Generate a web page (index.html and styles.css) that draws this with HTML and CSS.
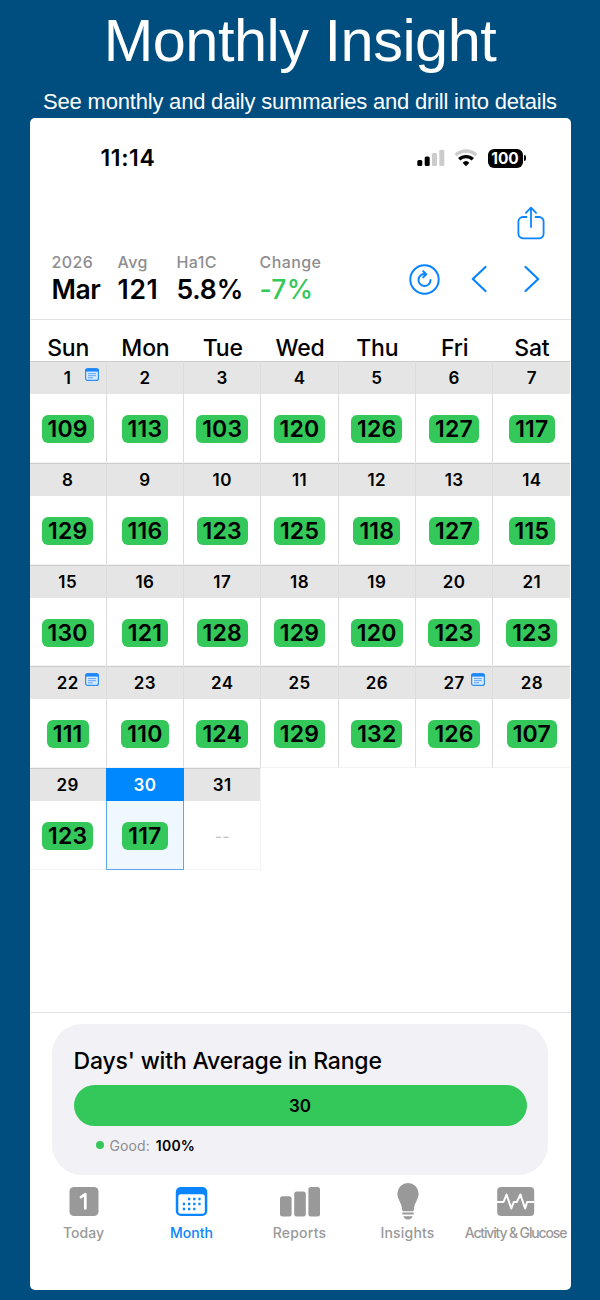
FILE: index.html
```html
<!DOCTYPE html>
<html lang="en">
<head>
  <meta charset="UTF-8">
  <meta name="viewport" content="width=device-width, initial-scale=1.0">
  <title>Monthly Insight</title>
  <link rel="stylesheet" href="styles.css">
</head>
<body>
  <h1>Monthly Insight</h1>
  <p class="subtitle">See monthly and daily summaries and drill into details</p>

  <div class="phone">
    <div class="status-bar">
      <span class="time">11:14</span>
      <svg class="signal" width="28" height="18" viewBox="0 0 28 18">
        <rect x="0.3" y="11" width="5" height="6" rx="1.5"/>
        <rect x="7.7" y="7.6" width="5" height="9.4" rx="1.5"/>
        <rect x="15" y="4" width="5" height="13" rx="1.5" fill="#ccc"/>
        <rect x="22.3" y="0.7" width="5" height="16.3" rx="1.5" fill="#ccc"/>
      </svg>
      <svg class="wifi" width="24" height="18" viewBox="0 0 24 18" fill="none" stroke-width="3.3">
        <path d="M1.7 6.1a15 15 0 0 1 20.6 0" stroke="#ccc"/>
        <path d="M5.2 10.3a9.8 9.8 0 0 1 13.6 0" stroke="#000"/>
        <path d="M12 17.2l-3.4-3.5a5 5 0 0 1 6.8 0z" fill="#000"/>
      </svg>
      <span class="battery">100</span>
      <span class="battery-tip"></span>
    </div>

    <div class="toolbar">
      <svg width="28" height="34" viewBox="0 0 28 34" fill="none" stroke="#0a84ff" stroke-width="1.8" stroke-linecap="round" stroke-linejoin="round">
        <path d="M9.5 11H6a4.6 4.6 0 0 0-4.6 4.6v12A4.6 4.6 0 0 0 6 32.4h16a4.6 4.6 0 0 0 4.6-4.6v-12A4.6 4.6 0 0 0 22 11h-3.5"/>
        <path d="M14 21V2M8.9 6.8L14 1.6l5.1 5.2"/>
      </svg>
    </div>

    <div class="summary">
      <div class="stat month"><span class="label">2026</span><span class="value">Mar</span></div>
      <div class="stat avg"><span class="label">Avg</span><span class="value">121</span></div>
      <div class="stat a1c"><span class="label">Ha1C</span><span class="value">5.8%</span></div>
      <div class="stat change"><span class="label">Change</span><span class="value">-7%</span></div>
      <div class="nav">
        <svg width="31" height="31" viewBox="0 0 31 31" fill="none" stroke="#0a84ff" stroke-width="2" stroke-linecap="round" stroke-linejoin="round">
          <circle cx="15.5" cy="15.5" r="14.2"/>
          <path d="M21.5 16a6 6 0 1 1-5.1-5.9M14.2 7.3l3 3-3 3.1"/>
        </svg>
        <svg width="16" height="28" viewBox="0 0 16 28" fill="none" stroke="#0a84ff" stroke-width="2.2" stroke-linecap="round" stroke-linejoin="round">
          <path d="M14.5 2L1.8 14l12.7 12"/>
        </svg>
        <svg width="16" height="28" viewBox="0 0 16 28" fill="none" stroke="#0a84ff" stroke-width="2.2" stroke-linecap="round" stroke-linejoin="round">
          <path d="M1.5 2l12.7 12L1.5 26"/>
        </svg>
      </div>
    </div>

    <div class="weekdays">
      <span>Sun</span><span>Mon</span><span>Tue</span><span>Wed</span><span>Thu</span><span>Fri</span><span>Sat</span>
    </div>
    <div class="calendar" id="calendar"></div>

    <div class="range">
      <div class="range-card">
        <h2>Days' with Average in Range</h2>
        <div class="bar">30</div>
        <div class="legend"><span class="dot"></span>Good: <b>100%</b></div>
      </div>
    </div>

    <div class="tabs">
      <div class="tab">
        <svg width="40" height="38" viewBox="0 0 40 38">
          <rect x="5.5" y="5" width="29" height="29" rx="4.5" fill="#999"/>
          <path d="M17 15.2l4.3-3V26.5" fill="none" stroke="#fff" stroke-width="2.7" stroke-linejoin="round" stroke-linecap="round"/>
        </svg>
        <span>Today</span>
      </div>
      <div class="tab active">
        <svg width="40" height="38" viewBox="0 0 40 38">
          <rect x="3.8" y="5" width="31.5" height="29" rx="5" fill="#0a84ff"/>
          <rect x="6.3" y="12.3" width="26.5" height="19.4" rx="2.5" fill="#fff"/>
          <path d="M16 17h12.6M10.8 22h17.8M10.8 27h12.6" stroke="#0a84ff" stroke-width="2.3" stroke-dasharray="2.3 2.9"/>
        </svg>
        <span>Month</span>
      </div>
      <div class="tab">
        <svg width="40" height="38" viewBox="0 0 40 38" fill="#999">
          <rect x="0" y="14.2" width="11.6" height="20.3" rx="2.5"/>
          <rect x="14.2" y="9.6" width="11.6" height="24.9" rx="2.5"/>
          <rect x="28.4" y="5" width="11.6" height="29.5" rx="2.5"/>
        </svg>
        <span class="spaced">Reports</span>
      </div>
      <div class="tab">
        <svg width="40" height="38" viewBox="0 0 40 38" fill="#999">
          <path d="M20 1a10.5 10.5 0 0 0-10.6 10.3c0 6.5 4 8.5 4.7 16.2.1 1.3.5 1.7 1.3 1.7h9.2c.8 0 1.2-.4 1.3-1.7.7-7.7 4.7-9.7 4.7-16.2A10.5 10.5 0 0 0 20 1z"/>
          <path d="M14.3 30.4h11.4v2H14.3zM15.3 34.2h9.4c-.6 1.9-2.3 3.3-4.7 3.3s-4.100-1.400-4.700-3.300z"/>
        </svg>
        <span class="spaced">Insights</span>
      </div>
      <div class="tab">
        <svg width="40" height="38" viewBox="0 0 40 38">
          <rect x="1.2" y="5" width="37" height="29" rx="4" fill="#999"/>
          <path d="M1 20h6.5l3-7.5 4.8 14 2.5-6.5h3l3.6-7.5 4.7 14 2-6.5h7.4" fill="none" stroke="#fff" stroke-width="2" stroke-linejoin="round"/>
        </svg>
        <span class="activity">Activity &amp; Glucose</span>
      </div>
    </div>
  </div>

  <script>
    const averages = [
      109, 113, 103, 120, 126, 127, 117,
      129, 116, 123, 125, 118, 127, 115,
      130, 121, 128, 129, 120, 123, 123,
      111, 110, 124, 129, 132, 126, 107,
      123, 117, null
    ];
    const daysWithNotes = [1, 22, 27];
    const selectedDay = 30;

    const noteIcon = `
      <svg class="note" width="14" height="13" viewBox="0 0 14 13">
        <rect x="0.6" y="0.6" width="12.8" height="11.8" rx="2" fill="#dcebfb" stroke="#2b8ef5" stroke-width="1.2"/>
        <path d="M0.5 2.3h13" stroke="#1c88f7" stroke-width="2.6"/>
        <path d="M3 5.6h8M3 7.7h8M3 9.8h5" stroke="#4a9df5" stroke-width="0.9"/>
      </svg>`;

    document.getElementById('calendar').innerHTML = averages.map((avg, i) => {
      const day = i + 1;
      const selected = day === selectedDay ? ' selected' : '';
      return `
        <div class="day${selected}">
          <div class="date">${day}${daysWithNotes.includes(day) ? noteIcon : ''}</div>
          <div class="reading">${avg ? `<span class="pill">${avg}</span>` : '<span class="empty">--</span>'}</div>
        </div>`;
    }).join('');
  </script>
</body>
</html>
```
FILE: styles.css
```css
* {
  box-sizing: border-box;
}

body {
  margin: 0;
  height: 1300px;
  background-color: #004e80;
  font-family: Inter, sans-serif;
  color: #000;
  overflow: hidden;
}

h1 {
  margin: 0;
  padding-top: 8px;
  height: 85px;
  font: 400 59.5px/66px "Liberation Sans", Arial, sans-serif;
  letter-spacing: -0.5px;
  text-align: center;
  color: #fff;
}

.subtitle {
  margin: 0;
  height: 33px;
  padding-top: 4px;
  font: 400 22px/26px "Liberation Sans", Arial, sans-serif;
  letter-spacing: -0.2px;
  text-align: center;
  color: #fff;
  white-space: nowrap;
}

.phone {
  display: flex;
  flex-direction: column;
  width: 541px;
  height: 1172px;
  margin-left: 29.5px;
  background: #fff;
  border-radius: 5px;
  overflow: hidden;
}

.status-bar {
  display: flex;
  align-items: center;
  height: 80px;
  padding: 0 45px 0 71px;
}

.time {
  font-size: 23px;
  font-weight: 600;
  letter-spacing: 0.6px;
  margin-right: auto;
}

.wifi {
  margin: 0 10px 0 9px;
}

.battery {
  width: 35px;
  height: 19px;
  border-radius: 6px;
  background: #000;
  color: #fff;
  font-size: 15.5px;
  font-weight: 700;
  line-height: 19px;
  text-align: center;
}

.battery-tip {
  width: 2px;
  height: 6px;
  margin-left: 1px;
  border-radius: 0 2px 2px 0;
  background: #000;
}

.toolbar {
  display: flex;
  justify-content: flex-end;
  height: 54px;
  padding: 8px 26px 0 0;
}

.summary {
  display: flex;
  height: 68px;
  padding-left: 22px;
  border-bottom: 1px solid #e3e3e5;
}

.stat {
  display: flex;
  flex-direction: column;
}

.month { width: 66px; }
.avg { width: 59px; }
.a1c { width: 83px; }
.change { width: 70px; }

.label {
  font-size: 16px;
  font-weight: 500;
  line-height: 20px;
  letter-spacing: 0.4px;
  color: #8e8e90;
}

.value {
  font-size: 26.5px;
  font-weight: 600;
  line-height: 35px;
}

.month .value {
  letter-spacing: -0.5px;
}

.avg .value {
  letter-spacing: 0.7px;
}

.a1c .value {
  letter-spacing: -0.2px;
}

.change .value {
  font-weight: 500;
  letter-spacing: 0.2px;
  color: #34c759;
}

.nav {
  display: flex;
  align-items: center;
  height: 54px;
  gap: 31px;
  margin: 0 31px 0 auto;
}

.nav svg:last-child {
  margin-left: 6px;
}

.weekdays {
  display: grid;
  grid-template-columns: repeat(7, 1fr);
  height: 41px;
  padding-top: 14px;
  font-size: 23px;
  font-weight: 500;
  line-height: 28px;
  letter-spacing: -0.2px;
  text-align: center;
}

.calendar {
  display: grid;
  grid-template-columns: repeat(7, 1fr);
  grid-auto-rows: 101.8px;
  align-content: start;
  height: 651px;
}

/* separators sit on the right edge of each cell */
.day {
  border-right: 1px solid #dcdcdc;
  border-bottom: 1px solid #f3f3f3;
}

.day:nth-child(7n) {
  border-right: none;
}

.day:nth-child(31) {
  border-right: 1px solid #f3f3f3;
}

.date {
  position: relative;
  height: 33px;
  border-top: 1px solid #cdcdcd;
  background: #e5e5e5;
  font-size: 17px;
  font-weight: 600;
  line-height: 33px;
  letter-spacing: 0.4px;
  text-align: center;
}

.note {
  position: absolute;
  top: 6px;
  right: 7px;
}

.reading {
  display: flex;
  align-items: center;
  justify-content: center;
  height: 68px;
  padding-top: 2px;
}

.pill {
  height: 28px;
  padding: 0 6px;
  border-radius: 6px;
  background: #34c759;
  font-size: 23px;
  font-weight: 600;
  line-height: 28px;
  letter-spacing: 0.2px;
}

.empty {
  font-size: 16px;
  color: #c4c4c6;
}

.day.selected {
  margin-left: -1px;
  border: 1px solid #5ea6ee;
  border-top: none;
  background: #f0f8ff;
}

.selected .date {
  margin: 0 -1px;
  border-color: #0088ff;
  background: #0088ff;
  color: #fff;
}

.range {
  height: 163px;
  padding: 11px 23px 0 22px;
  border-top: 1px solid #e3e3e5;
}

.range-card {
  height: 151px;
  padding: 23px 21px 0 22px;
  border-radius: 30px;
  background: #f2f1f6;
}

h2 {
  margin: 0 0 9px;
  font-size: 23px;
  font-weight: 500;
  line-height: 29px;
  letter-spacing: -0.17px;
  white-space: nowrap;
}

.bar {
  height: 41px;
  border-radius: 21px;
  background: #34c759;
  font-size: 17px;
  font-weight: 600;
  line-height: 42px;
  text-align: center;
}

.legend {
  display: flex;
  align-items: center;
  height: 18px;
  margin: 10px 0 0 22px;
  font-size: 14px;
  letter-spacing: 0.1px;
  color: #8e8e90;
}

.legend b {
  margin-left: 6px;
  font-weight: 600;
  letter-spacing: 0.2px;
  color: #000;
}

.dot {
  width: 8px;
  height: 8px;
  margin-right: 6px;
  border-radius: 50%;
  background: #34c759;
}

.tabs {
  display: grid;
  grid-template-columns: repeat(5, 108px);
  padding-top: 7px;
}

.tab {
  display: flex;
  flex-direction: column;
  align-items: center;
  font-size: 14px;
  font-weight: 500;
  line-height: 18px;
  white-space: nowrap;
  color: #999;
}

.tab span {
  margin-top: 4px;
}

.tab.active {
  color: #0a84ff;
}

.spaced {
  letter-spacing: 0.2px;
}

.activity {
  letter-spacing: -1.15px;
}
```
